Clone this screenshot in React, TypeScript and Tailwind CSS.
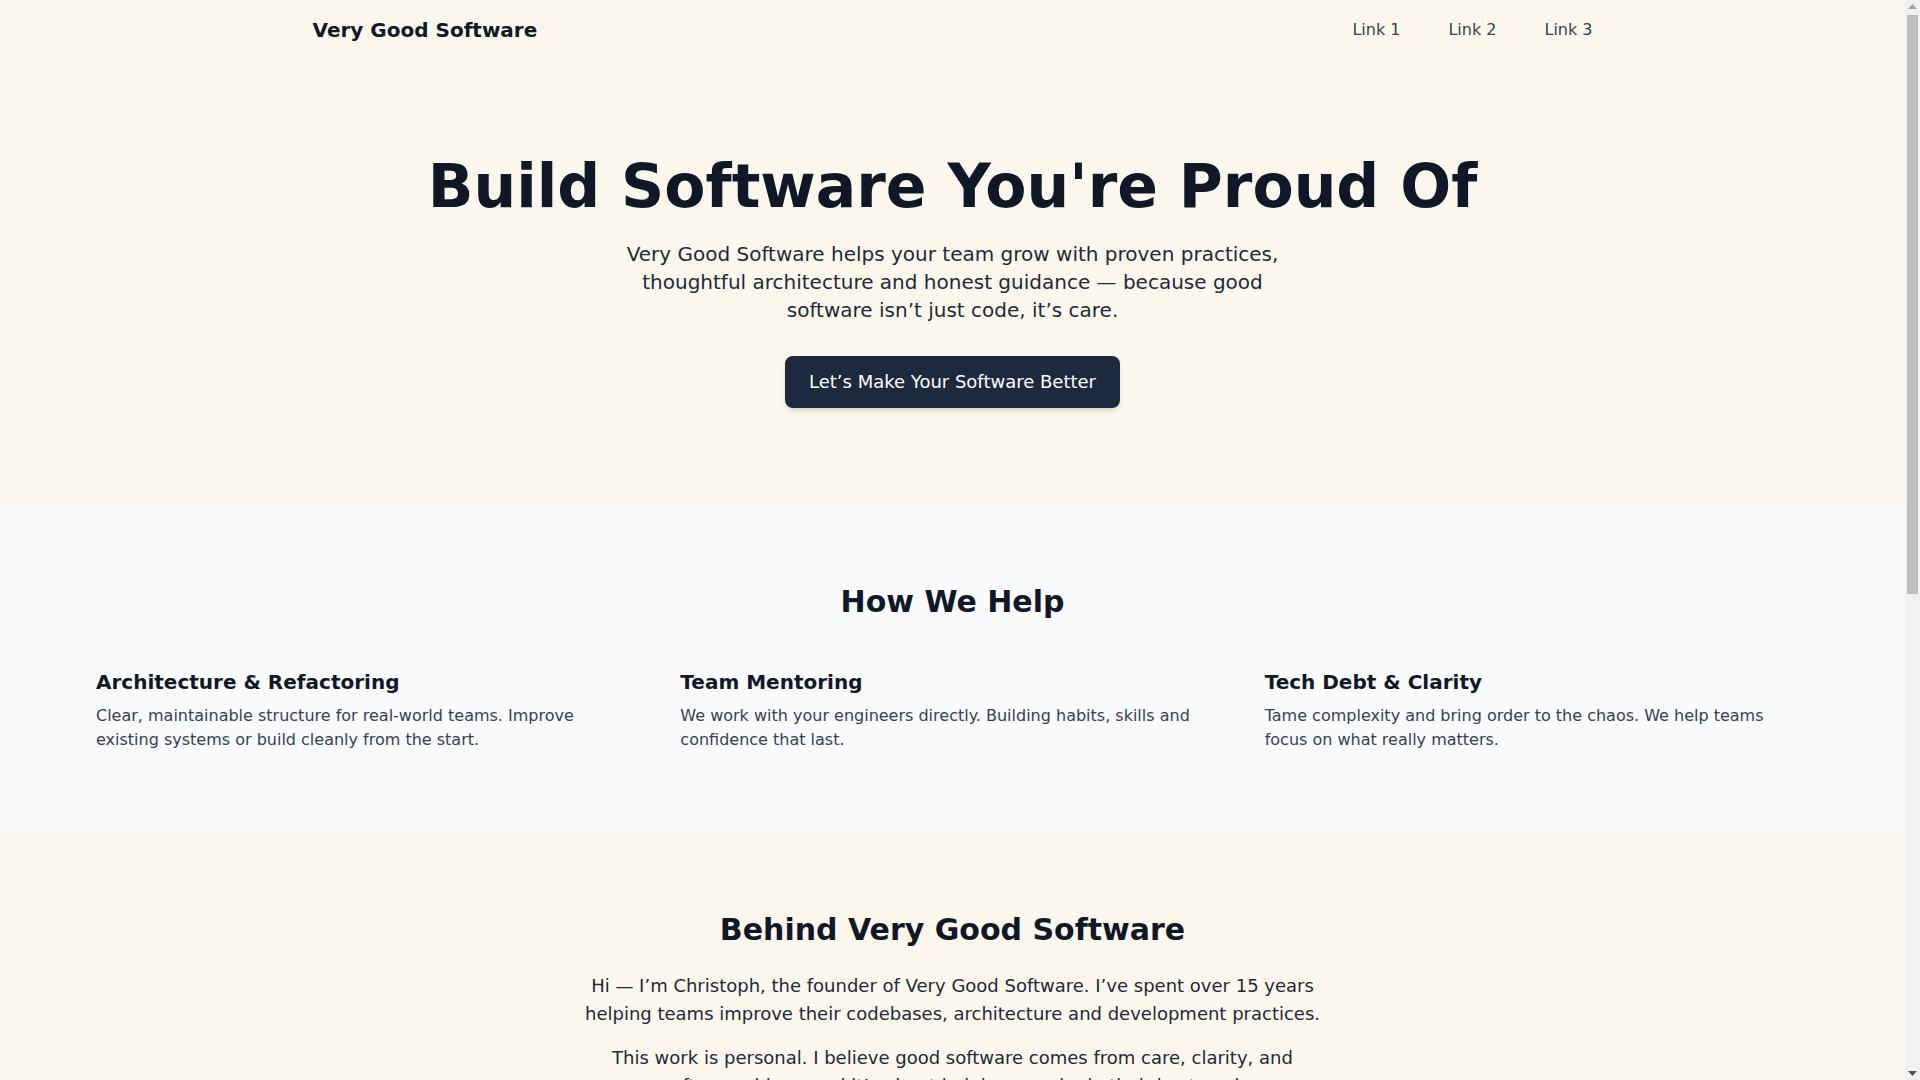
import React from 'react';

// --- Servicios mostrados en "How We Help" ---
interface Service {
  title: string;
  text: string;
}

const services: Service[] = [
  {
    title: 'Architecture & Refactoring',
    text: 'Clear, maintainable structure for real-world teams. Improve existing systems or build cleanly from the start.',
  },
  {
    title: 'Team Mentoring',
    text: 'We work with your engineers directly. Building habits, skills and confidence that last.',
  },
  {
    title: 'Tech Debt & Clarity',
    text: 'Tame complexity and bring order to the chaos. We help teams focus on what really matters.',
  },
];

const navLinks = ['Link 1', 'Link 2', 'Link 3'];

// Barra de scroll clásica del navegador (dibujada, como en la captura)
const Scrollbar: React.FC = () => (
  <div className="relative w-[15px] h-screen shrink-0 bg-[#f1f1f1]">
    <svg className="absolute top-[4px] left-[3px]" width="9" height="6" viewBox="0 0 9 6">
      <polygon points="4.5,0 9,5 0,5" fill="#a3a3a3" />
    </svg>
    <div className="absolute top-[15px] left-[2px] w-[11px] h-[579px] bg-[#bebebe]" />
    <svg className="absolute bottom-[4px] left-[3px]" width="9" height="6" viewBox="0 0 9 6">
      <polygon points="0,1 9,1 4.5,6" fill="#505050" />
    </svg>
  </div>
);

const App: React.FC = () => {
  return (
    <div className="flex h-screen overflow-hidden bg-[#fbf7ed] font-['DejaVu_Sans','Noto_Sans',sans-serif] text-gray-900">
      <div className="flex-1 min-w-0 overflow-hidden">
        {/* Navegación */}
        <nav className="bg-[#fbf7ed]">
          <div className="max-w-7xl mx-auto flex items-center justify-between py-4">
            <a href="#" className="text-xl font-bold text-gray-900">
              Very Good Software
            </a>
            <ul className="flex items-center gap-12">
              {navLinks.map((link) => (
                <li key={link}>
                  <a href="#" className="text-base text-gray-700 hover:text-gray-900">
                    {link}
                  </a>
                </li>
              ))}
            </ul>
          </div>
        </nav>

        {/* Hero */}
        <section className="bg-[#fbf7ed] py-24 text-center">
          <h1 className="text-6xl font-bold text-gray-900 mb-6">Build Software You're Proud Of</h1>
          <p className="text-xl text-gray-800 max-w-2xl mx-auto mb-8">
            Very Good Software helps your team grow with proven practices, thoughtful architecture and honest
            guidance — because good software isn’t just code, it’s care.
          </p>
          <a
            href="#"
            className="inline-block bg-slate-800 text-white text-lg px-6 py-3 rounded-lg shadow-md hover:bg-slate-700"
          >
            Let’s Make Your Software Better
          </a>
        </section>

        {/* How We Help */}
        <section className="bg-slate-50 py-20 px-24">
          <h2 className="text-3xl font-bold text-center text-gray-900 mb-12">How We Help</h2>
          <div className="grid grid-cols-3 gap-10">
            {services.map((service) => (
              <div key={service.title}>
                <h3 className="text-xl font-bold text-gray-900 mb-2">{service.title}</h3>
                <p className="text-base text-gray-700">{service.text}</p>
              </div>
            ))}
          </div>
        </section>

        {/* Behind Very Good Software */}
        <section className="bg-[#fbf7ed] py-20 text-center">
          <h2 className="text-3xl font-bold text-gray-900 mb-6">Behind Very Good Software</h2>
          <div className="max-w-3xl mx-auto space-y-4 text-lg text-gray-800">
            <p>
              Hi — I’m Christoph, the founder of Very Good Software. I’ve spent over 15 years helping teams improve
              their codebases, architecture and development practices.
            </p>
            <p>
              This work is personal. I believe good software comes from care, clarity, and craftsmanship — and it’s
              about helping people do their best work.
            </p>
            <p>
              I work closely with a small number of teams at a time, so every engagement gets the attention it
              deserves.
            </p>
          </div>
        </section>

        {/* Contacto */}
        <section className="bg-slate-50 py-24 text-center">
          <h2 className="text-3xl font-bold text-gray-900 mb-6">Let’s Talk</h2>
          <p className="text-lg text-gray-800 max-w-2xl mx-auto mb-8">
            Tell me about your team and your codebase. We’ll figure out together where the biggest improvements
            are waiting.
          </p>
          <a
            href="#"
            className="inline-block bg-slate-800 text-white text-lg px-6 py-3 rounded-lg shadow-md hover:bg-slate-700"
          >
            Get in Touch
          </a>
        </section>
      </div>
      <Scrollbar />
    </div>
  );
};

export default App;
